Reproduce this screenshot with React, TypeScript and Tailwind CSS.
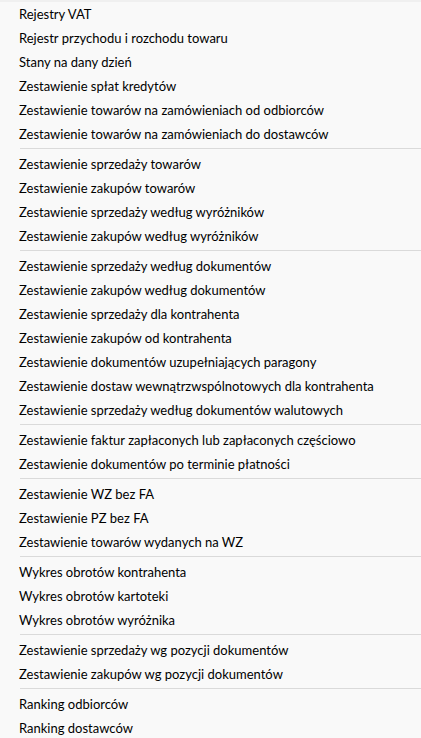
import React from 'react';

const groups: string[][] = [
  [
    'Rejestry VAT',
    'Rejestr przychodu i rozchodu towaru',
    'Stany na dany dzień',
    'Zestawienie spłat kredytów',
    'Zestawienie towarów na zamówieniach od odbiorców',
    'Zestawienie towarów na zamówieniach do dostawców',
  ],
  [
    'Zestawienie sprzedaży towarów',
    'Zestawienie zakupów towarów',
    'Zestawienie sprzedaży według wyróżników',
    'Zestawienie zakupów według wyróżników',
  ],
  [
    'Zestawienie sprzedaży według dokumentów',
    'Zestawienie zakupów według dokumentów',
    'Zestawienie sprzedaży dla kontrahenta',
    'Zestawienie zakupów od kontrahenta',
    'Zestawienie dokumentów uzupełniających paragony',
    'Zestawienie dostaw wewnątrzwspólnotowych dla kontrahenta',
    'Zestawienie sprzedaży według dokumentów walutowych',
  ],
  [
    'Zestawienie faktur zapłaconych lub zapłaconych częściowo',
    'Zestawienie dokumentów po terminie płatności',
  ],
  ['Zestawienie WZ bez FA', 'Zestawienie PZ bez FA', 'Zestawienie towarów wydanych na WZ'],
  ['Wykres obrotów kontrahenta', 'Wykres obrotów kartoteki', 'Wykres obrotów wyróżnika'],
  ['Zestawienie sprzedaży wg pozycji dokumentów', 'Zestawienie zakupów wg pozycji dokumentów'],
  ['Ranking odbiorców', 'Ranking dostawców'],
];

export default function App() {
  return (
    <div className="h-[738px] overflow-hidden bg-[#f9f9f9] border-t-2 border-[#f0f0f0] text-[13px] text-black font-['Lato',sans-serif]">
      {groups.map((items, gi) => (
        <div key={gi}>
          {gi > 0 && <div className="mt-[2px] mb-[3px] ml-[20px] h-px bg-[#dadada]"></div>}
          {items.map((label) => (
            <div key={label} className="h-[24px] leading-[24px] pl-[19px] whitespace-nowrap cursor-default">
              {label}
            </div>
          ))}
        </div>
      ))}
    </div>
  );
}
